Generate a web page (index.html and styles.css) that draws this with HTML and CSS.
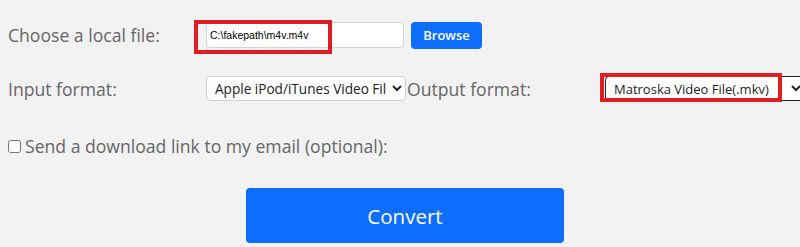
FILE: index.html
```html
<!DOCTYPE html>
<html>
<head>
<meta charset="utf-8">
<link rel="stylesheet" href="styles.css">
</head>
<body>
<form class="form">
  <div class="row row-file">
    <label class="label">Choose a local file:</label>
    <div class="file-group">
      <input class="text-input" type="text" value="C:\fakepath\m4v.m4v">
      <button type="button" class="browse">Browse</button>
    </div>
  </div>
  <div class="row row-format">
    <label class="label">Input format:</label>
    <select class="select select-in">
      <option>Apple iPod/iTunes Video File(.m4v)</option>
    </select>
    <label class="label label-out">Output format:</label>
    <select class="select select-dark">
      <option>Matroska Video File(.mkv)</option>
    </select>
  </div>
  <div class="row row-check">
    <input type="checkbox" class="check" id="mail">
    <label class="check-label" for="mail">Send a download link to my email (optional):</label>
  </div>
  <div class="row row-submit">
    <button type="button" class="convert">Convert</button>
  </div>
  <div class="mark mark-file"></div>
  <div class="mark mark-out"></div>
</form>
</body>
</html>
```
FILE: styles.css
```css
html, body {
  margin: 0;
  padding: 0;
  background: #f2f2f2;
  overflow: hidden;
}
body {
  padding: 0 8px;
  font-family: "Open Sans", "Liberation Sans", sans-serif;
  color: #666;
}
.form {
  position: relative;
  width: 792px;
  height: 247px;
  margin: 0;
}
.row {
  display: flex;
  align-items: center;
}
.label {
  width: 198px;
  flex: none;
  font-size: 17.6px;
  color: #666;
}
.row-file {
  padding-top: 22px;
  height: 26px;
}
.file-group {
  display: flex;
  align-items: center;
  gap: 7px;
}
.text-input {
  box-sizing: border-box;
  width: 198px;
  height: 26px;
  margin: 0;
  padding: 0 0 0 3px;
  border: 1px solid #d4d4d4;
  border-radius: 4px;
  background: #fff;
  font-family: "Liberation Sans", Arial, sans-serif;
  font-size: 10.5px;
  color: #000;
}
.browse {
  box-sizing: border-box;
  width: 71px;
  height: 27px;
  margin: 0;
  padding: 0;
  border: none;
  border-radius: 4px;
  background: #0d6efd;
  color: #fff;
  font-family: "Open Sans", sans-serif;
  font-size: 13px;
  font-weight: 600;
}
.row-format {
  margin-top: 28px;
  height: 25px;
}
.select {
  box-sizing: border-box;
  width: 200px;
  height: 25px;
  flex: none;
  margin: 0;
  padding: 0 2px 0 4px;
  border: 1px solid #d0d0d0;
  border-radius: 4px;
  background: #fff;
  font-family: "Open Sans", sans-serif;
  font-size: 13px;
  color: #222;
}
.select-in {
  font-size: 13.6px;
}
.label-out {
  margin-left: 1px;
}
.select-dark {
  border-color: #222;
  width: 200px;
}
.row-check {
  margin-top: 33px;
  height: 24px;
}
.check {
  width: 13px;
  height: 13px;
  margin: 0 4px 0 0;
}
.check-label {
  font-size: 17.6px;
  color: #666;
}
.row-submit {
  margin-top: 30px;
}
.convert {
  box-sizing: border-box;
  width: 318px;
  height: 55px;
  margin: 0 0 0 238px;
  padding: 0;
  border: none;
  border-radius: 4px;
  background: #0d6efd;
  color: #fff;
  font-family: "Open Sans", sans-serif;
  font-size: 20.5px;
}
.mark {
  position: absolute;
  box-sizing: border-box;
  border: 4px solid #e11d24;
}
.mark-file {
  left: 186px;
  top: 20px;
  width: 138px;
  height: 34px;
}
.mark-out {
  left: 592px;
  top: 73px;
  width: 182px;
  height: 29px;
}
```
